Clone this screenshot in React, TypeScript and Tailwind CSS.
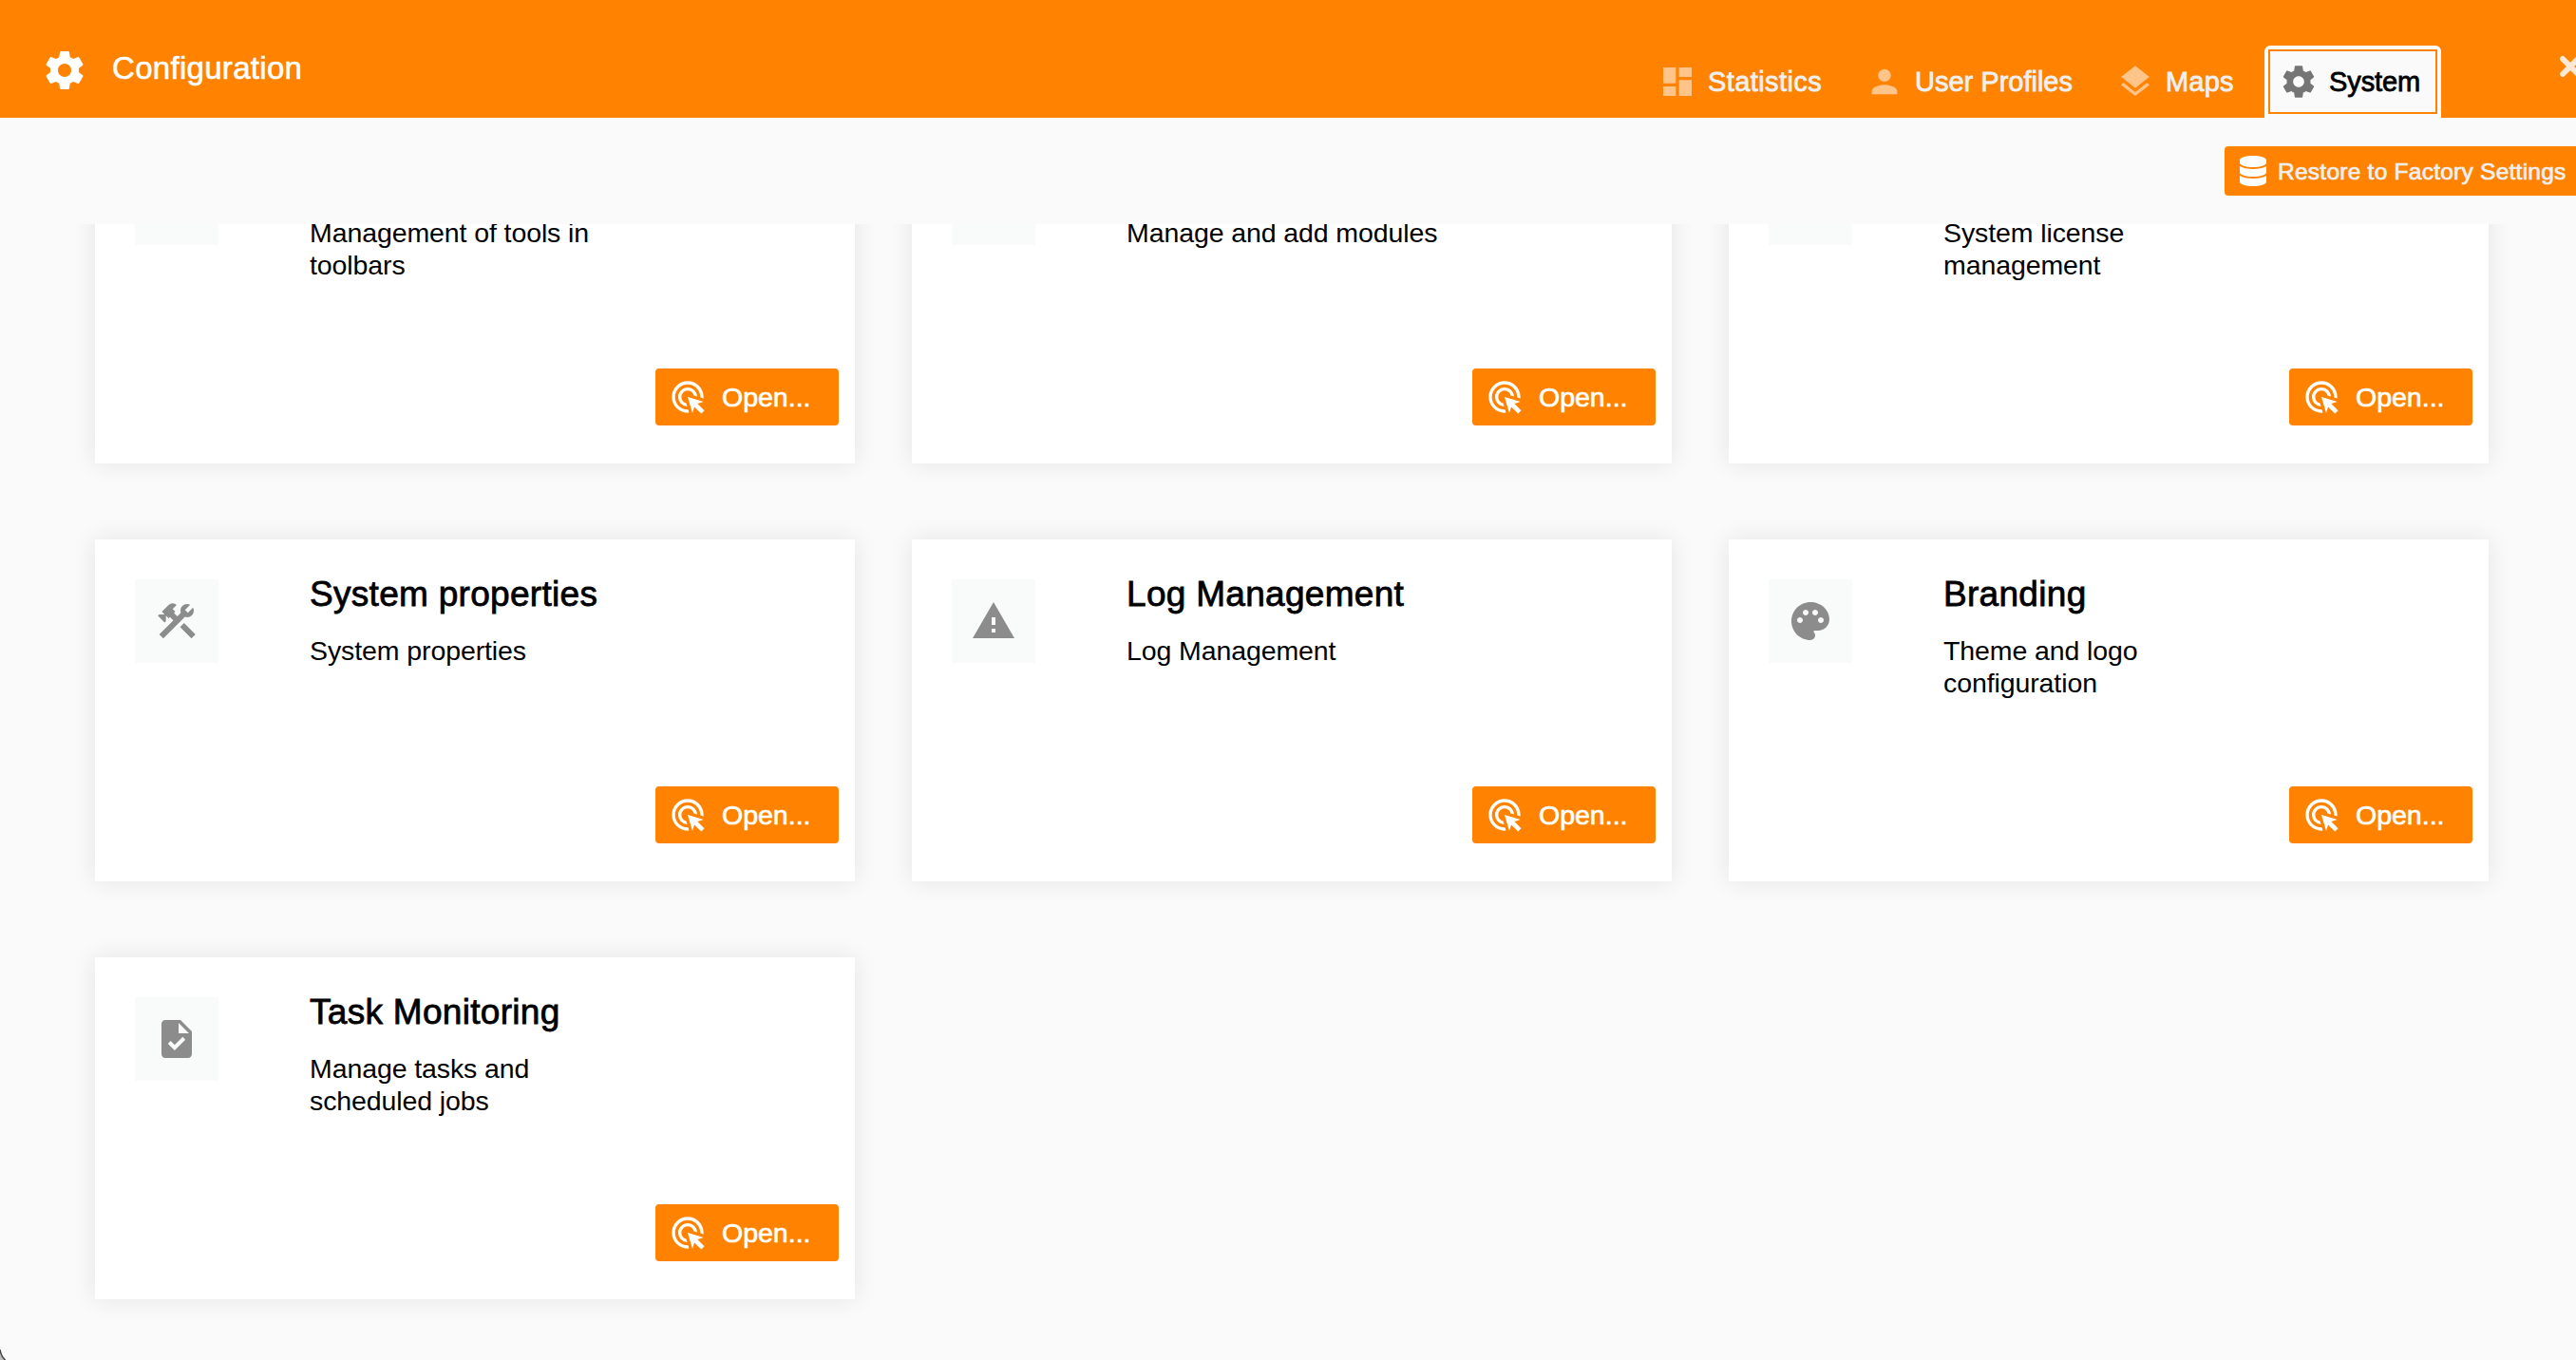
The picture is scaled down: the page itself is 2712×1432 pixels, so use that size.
import React from 'react';
import { MdAdsClick, MdConstruction, MdDashboard, MdLayers, MdPalette, MdPerson, MdTask, MdWarning } from 'react-icons/md';
import { FaDatabase } from 'react-icons/fa';

const CogIcon = ({ className }: { className?: string }) => (
    <svg viewBox="0 0 24 24" fill="currentColor" className={ className }>
        <path d="M19.43 12.98c.04-.32.07-.64.07-.98s-.03-.66-.07-.98l2.11-1.65c.19-.15.24-.42.12-.64l-2-3.46c-.12-.22-.39-.3-.61-.22l-2.49 1c-.52-.4-1.08-.73-1.69-.98l-.38-2.65C14.46 2.18 14.25 2 14 2h-4c-.25 0-.46.18-.49.42l-.38 2.65c-.61.25-1.17.59-1.69.98l-2.49-1c-.23-.09-.49 0-.61.22l-2 3.46c-.13.22-.07.49.12.64l2.11 1.65c-.04.32-.07.65-.07.98s.03.66.07.98l-2.11 1.65c-.19.15-.24.42-.12.64l2 3.46c.12.22.39.3.61.22l2.49-1c.52.4 1.08.73 1.69.98l.38 2.65c.03.24.24.42.49.42h4c.25 0 .46-.18.49-.42l.38-2.65c.61-.25 1.17-.59 1.69-.98l2.49 1c.23.09.49 0 .61-.22l2-3.46c.12-.22.07-.49-.12-.64l-2.11-1.65zM12 15.5c-1.93 0-3.5-1.57-3.5-3.5s1.57-3.5 3.5-3.5 3.5 1.57 3.5 3.5-1.57 3.5-3.5 3.5z"/>
    </svg>
);

// the first row is scrolled past its titles
const cards = [
    { text: 'Management of tools in toolbars' },
    { text: 'Manage and add modules' },
    { text: 'System license management' },
    { title: 'System properties', text: 'System properties', icon: MdConstruction },
    { title: 'Log Management', text: 'Log Management', icon: MdWarning },
    { title: 'Branding', text: 'Theme and logo configuration', icon: MdPalette },
    { title: 'Task Monitoring', text: 'Manage tasks and scheduled jobs', icon: MdTask },
];

type TabProps = { icon: React.ElementType; label: string; className: string };

const Tab = ({ icon: Icon, label, className }: TabProps) => (
    <a href="#" className={ `flex h-[76px] items-center gap-3 px-4 text-[#f0f0f0] ${className}` }>
        <Icon className="size-10 shrink-0 text-[#ffc48a]"/>
        <span className="whitespace-nowrap text-[29px] leading-none [-webkit-text-stroke:0.8px]">{ label }</span>
    </a>
);

type CardProps = { title?: string; text: string; icon?: React.ElementType };

const Card = ({ title, text, icon: Icon }: CardProps) => (
    <article className="flex h-[360px] w-[800px] flex-col bg-white pl-[42px] pr-[17px] pt-[42px] pb-10 shadow-[0_0_24px_rgba(0,0,0,0.09)]">
        <div className="flex flex-1">
            <div className="flex size-[88px] shrink-0 items-center justify-center bg-[#f9fbfb]">
                { Icon && <Icon className="size-12 text-[#8c8c8c]"/> }
            </div>
            <div className="ml-24 text-black">
                <h2 className="-mt-[4px] h-10 whitespace-nowrap text-[37px] leading-10 tracking-[0.3px] [-webkit-text-stroke:0.8px]">{ title }</h2>
                <p className="mt-[22px] w-[350px] text-[28.5px] leading-[34px] tracking-[-0.1px]">{ text }</p>
            </div>
        </div>
        <button className="flex h-[60px] w-[193px] items-center self-end rounded bg-[#ff8300] pl-3.5 text-white">
            <MdAdsClick className="size-10"/>
            <span className="ml-4 text-[28.5px] leading-none [-webkit-text-stroke:0.7px]">Open...</span>
        </button>
    </article>
);

const App = () => {

    return (
        <section className="relative flex h-screen w-full flex-col overflow-hidden bg-[#fafafa] font-['Liberation_Sans',Arial,sans-serif]">
            <header className="flex h-[124px] shrink-0 bg-[#ff8300] text-white">
                <div className="flex flex-1 items-center pl-11 pt-6">
                    <CogIcon className="size-12"/>
                    <h1 className="-mt-1.5 ml-[26px] text-[33px] leading-none tracking-[0.3px] [-webkit-text-stroke:0.6px]">Configuration</h1>
                </div>
                <nav className="flex items-end">
                    <Tab icon={ MdDashboard } label="Statistics" className="w-[218px] tracking-[0.4px]"/>
                    <Tab icon={ MdPerson } label="User Profiles" className="w-[264px]"/>
                    <Tab icon={ MdLayers } label="Maps" className="w-[172px] tracking-[0.2px]"/>
                    <a href="#" className="h-[76px] w-[186px] rounded-t-md bg-[#fafafa] p-1 text-black">
                        <span className="flex h-full items-center gap-3 border-2 border-[#ff8300] pl-2.5">
                            <CogIcon className="size-10 shrink-0 text-[#757575]"/>
                            <span className="text-[29px] leading-none tracking-[-0.1px] [-webkit-text-stroke:0.8px]">System</span>
                        </span>
                    </a>
                </nav>
                <button className="ml-[124px] mt-[58px] h-6 w-[18px] shrink-0 overflow-hidden text-[#ffe9d6]" aria-label="Close">
                    <svg viewBox="0 0 24 24" className="size-6 max-w-none" stroke="currentColor" strokeWidth="6" strokeLinecap="round">
                        <path d="M4 4l16 16M20 4L4 20"/>
                    </svg>
                </button>
            </header>
            <div className="flex h-28 shrink-0 justify-end pt-[30px]">
                <button className="flex h-[52px] w-[370px] items-center rounded-l bg-[#ff8300] pl-4 text-[#f0f0f0]">
                    <FaDatabase className="h-8 w-7 text-white"/>
                    <span className="ml-3 mt-0.5 whitespace-nowrap text-[24.5px] leading-none tracking-[0.25px] [-webkit-text-stroke:0.7px]">Restore to Factory Settings</span>
                </button>
            </div>
            <main className="min-h-0 flex-1 overflow-hidden">
                <div className="-mt-[108px] grid grid-cols-[800px_800px_800px] gap-x-[60px] gap-y-20 pl-[100px]">
                    { cards.map(card => <Card key={ card.text } { ...card }/>) }
                </div>
            </main>
            <svg className="absolute bottom-0 left-0 h-3 w-1.5" viewBox="0 0 6 12">
                <path d="M0 0Q1 8 6 12H0Z" fill="#bdbdbd"/>
                <path d="M0 1Q1 8 5.500 12" fill="none" stroke="#444" strokeWidth="1.500"/>
            </svg>
        </section>
    );
};

export default App;
